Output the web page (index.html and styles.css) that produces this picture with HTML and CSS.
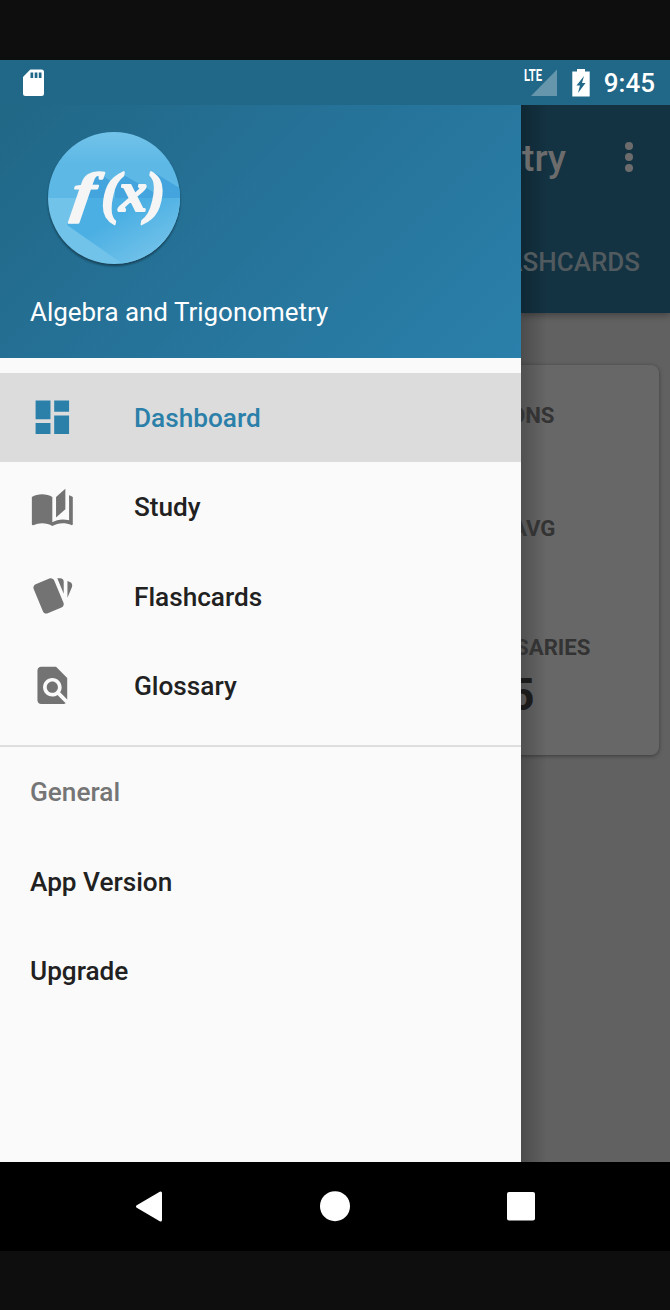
FILE: index.html
```html
<!DOCTYPE html>
<html lang="en">
<head>
<meta charset="utf-8">
<title>Algebra and Trigonometry</title>
<link rel="stylesheet" href="styles.css">
</head>
<body>
<div class="phone">
  <header class="status">
    <svg class="sd" width="22" height="28" viewBox="0 0 22 28"><path fill="#fff" fill-rule="evenodd" d="M8.300 .500H19.500a2.500 2.500 0 0 1 2.500 2.500v21.500A2.500 2.500 0 0 1 19.500 27H3.500a2.500 2.500 0 0 1-2.500-2.500V8zM8.500 3.500v5.500h2.700V3.500zm4.200 0v5.500h2.700V3.500zm4.100 0v5.500h2.700V3.500z"/></svg>
    <svg class="signal" width="34" height="28" viewBox="0 0 34 28"><path fill="#6596ab" d="M33 .500V27H7z"/><text class="lte" x="0" y="12" textLength="18" lengthAdjust="spacingAndGlyphs">LTE</text></svg>
    <svg class="battery" width="18" height="28" viewBox="0 0 18 28"><path fill="#fff" fill-rule="evenodd" d="M5 0h8V2.500h4.700v25H.300V2.500H5zM12 7L4.500 16.500H8L6 24l7.500-10H10z"/></svg>
    <span class="time">9:45</span>
  </header>
  <div class="screen">
    <aside class="drawer">
      <div class="account">
        <svg class="logo" width="138" height="140" viewBox="0 0 138 140">
          <defs>
            <linearGradient id="sky" x1="0" y1="0" x2="0" y2="1"><stop offset="0" stop-color="#74c4ea"/><stop offset=".5" stop-color="#5db8e5"/></linearGradient>
            <linearGradient id="cast" x1="0" y1="0" x2="1" y2="1"><stop offset=".35" stop-color="#4bafe3"/><stop offset=".8" stop-color="#71c2e9"/></linearGradient>
            <clipPath id="disc"><circle cx="69" cy="69" r="66"/></clipPath>
            <filter id="soft"><feGaussianBlur stdDeviation="1"/></filter>
          </defs>
          <circle cx="69" cy="71" r="66" fill="#153f54" filter="url(#soft)"/>
          <g clip-path="url(#disc)">
            <path fill="url(#sky)" d="M0 0h138v69H0z"/>
            <path fill="#71c3e9" d="M0 69h138v69H0z"/>
            <path fill="url(#cast)" d="M36 69h102v69H82L22 96z"/>
            <path fill="#43a4de" d="M54 44l13 9-7 16H40l10-22zM77 45l33 19v5H70V50zM110 44l28 17v8h-30z"/>
          </g>
          <text class="formula" transform="translate(25.500 82) skewX(-7) scale(1.200 .950)">f</text>
          <text class="formula" x="56" y="82.500">(</text>
          <text class="formula variable" x="74" y="82">x</text>
          <text class="formula" x="101" y="82.500">)</text>
        </svg>
        <div class="course">Algebra and Trigonometry</div>
      </div>
      <nav class="menu">
        <a class="item active"><svg class="icon" viewBox="0 0 24 24"><path d="M3 13h8V3H3v10zm0 8h8v-6H3v6zm10 0h8V11h-8v10zm0-18v6h8V3h-8z"/></svg><span>Dashboard</span></a>
        <a class="item"><svg class="icon" viewBox="0 0 24 24"><path d="M19 2L14 6.500V17.500L19 13V2M6.500 5C4.550 5 2.450 5.400 1 6.500V21.160C1 21.410 1.250 21.660 1.500 21.660C1.600 21.660 1.650 21.590 1.750 21.590C3.100 20.940 5.050 20.500 6.500 20.500C8.450 20.500 10.550 20.900 12 22C13.350 21.150 15.800 20.500 17.500 20.500C19.150 20.500 20.850 20.810 22.250 21.560C22.350 21.610 22.400 21.590 22.500 21.590C22.750 21.590 23 21.340 23 21.090V6.500C22.400 6.050 21.750 5.750 21 5.500V19C19.900 18.650 18.700 18.500 17.500 18.500C15.800 18.500 13.350 19.150 12 20V6.500C10.550 5.400 8.450 5 6.500 5Z"/></svg><span>Study</span></a>
        <a class="item"><svg class="icon" viewBox="0 0 24 24"><path d="M21.470 4.350L20.130 3.790V12.820L22.560 6.960C22.970 5.940 22.500 4.770 21.470 4.350M1.970 8.050L6.930 20C7.240 20.770 7.970 21.240 8.740 21.260C9 21.260 9.270 21.210 9.530 21.100L16.900 18.050C17.650 17.740 18.110 17 18.130 16.260C18.140 16 18.090 15.710 18 15.450L13 3.500C12.710 2.730 11.970 2.260 11.190 2.250C10.930 2.250 10.670 2.310 10.420 2.400L3.060 5.450C2.040 5.870 1.550 7.040 1.970 8.050M18.120 4.250A2 2 0 0 0 16.120 2.250H14.670L18.120 10.590"/></svg><span>Flashcards</span></a>
        <a class="item"><svg class="icon" viewBox="0 0 24 24"><path d="M20 19.590V8l-6-6H6c-1.100 0-1.990.900-1.990 2L4 20c0 1.100.890 2 1.990 2H18c.450 0 .850-.150 1.190-.400l-4.430-4.430c-.800.520-1.740.830-2.760.830-2.760 0-5-2.240-5-5s2.240-5 5-5 5 2.240 5 5c0 1.020-.310 1.960-.830 2.750L20 19.590zM9 13c0 1.660 1.340 3 3 3s3-1.340 3-3-1.340-3-3-3-3 1.340-3 3z"/></svg><span>Glossary</span></a>
      </nav>
      <section class="general">
        <div class="item heading">General</div>
        <a class="item">App Version</a>
        <a class="item">Upgrade</a>
      </section>
    </aside>
    <main class="page">
      <div class="appbar">
        <div class="titlebar">
          <span class="title">try</span>
          <svg width="8" height="30" viewBox="0 0 8 30" fill="#6c6c6c"><circle cx="4" cy="4" r="4"/><circle cx="4" cy="15" r="4"/><circle cx="4" cy="26" r="4"/></svg>
        </div>
        <div class="tab">ASHCARDS</div>
      </div>
      <div class="card">
        <div class="label questions">ONS</div>
        <div class="label average">AVG</div>
        <div class="label glossaries">SARIES</div>
        <div class="count">5</div>
      </div>
    </main>
  </div>
  <footer class="navbar">
    <svg width="30" height="32" viewBox="0 0 30 32"><path fill="#fff" stroke="#fff" stroke-width="3" stroke-linejoin="round" d="M3.500 16.500L26.500 3v27z"/></svg>
    <svg width="30" height="32" viewBox="0 0 30 32"><circle cx="15" cy="16.200" r="15" fill="#fff"/></svg>
    <svg width="30" height="32" viewBox="0 0 30 32"><rect x="1" y="2" width="28" height="28.500" rx="2" fill="#fff"/></svg>
  </footer>
</div>
</body>
</html>
```
FILE: styles.css
```css
* { box-sizing: border-box; }
body {
  margin: 0;
  background: #0e0e0e;
  font-family: Roboto, sans-serif;
}
.phone {
  width: 670px;
  height: 1310px;
  padding: 60px 0 59px;
  display: flex;
  flex-direction: column;
}
.status {
  height: 45px;
  padding: 0 15px 0 22px;
  display: flex;
  align-items: center;
  background: #206788;
}
.signal { margin-left: auto; overflow: visible; }
.battery { margin: 0 14px 0 14px; }
.lte { font-size: 16.500px; font-weight: 700; fill: #fff; }
.time {
  font-size: 26px;
  font-weight: 500;
  line-height: 43px;
  padding-top: 2px;
  color: #fff;
}
.screen {
  flex: 1;
  min-height: 0;
  display: flex;
}
.drawer {
  width: 521px;
  flex: none;
  background: #fafafa;
}
.account {
  height: 253px;
  padding: 23.500px 30px 0;
  background: linear-gradient(135deg, #216786 0%, #26739a 50%, #2a80aa 100%);
}
.logo { display: block; margin-left: 15px; }
.formula {
  font-family: "Liberation Serif", serif;
  font-size: 58px;
  font-weight: 700;
  font-style: italic;
  fill: #f5f5f5;
  stroke: #f5f5f5;
  stroke-width: 2px;
  stroke-linejoin: round;
}
.variable { font-size: 56px; }
.course {
  margin-top: 28px;
  font-size: 25.950px;
  line-height: 30px;
  color: #fff;
}
.menu { padding: 15px 0; }
.item {
  height: 89.330px;
  padding: 1px 30px 0;
  display: flex;
  align-items: center;
  gap: 59.300px;
  font-size: 26.200px;
  font-weight: 500;
  color: #212121;
}
.icon {
  width: 44.670px;
  height: 44.670px;
  margin-top: -1px;
  fill: #737373;
}
.active { background: #dcdcdc; color: #2b80aa; }
.active .icon { fill: #2b80aa; }
.general { border-top: 2px solid #dedede; }
.heading { color: #757575; }
.page {
  width: 149px;
  overflow: hidden;
  background: linear-gradient(90deg, rgba(0, 0, 0, .22), rgba(0, 0, 0, 0) 26px), #616161;
}
.appbar {
  height: 208px;
  background: linear-gradient(90deg, rgba(0, 0, 0, .22), rgba(0, 0, 0, 0) 26px), #133242;
  box-shadow: 0 2px 7px rgba(0, 0, 0, .35);
}
.titlebar {
  height: 104px;
  padding: 0 37px 0 1px;
  display: flex;
  align-items: center;
  justify-content: space-between;
}
.title {
  font-size: 37.200px;
  font-weight: 500;
  line-height: 44px;
  color: #6c6c6c;
  padding-top: 1px;
}
.tab {
  height: 104px;
  padding: 2px 30px 0 0;
  display: flex;
  justify-content: flex-end;
  align-items: center;
  font-size: 26px;
  font-weight: 500;
  color: #515a5e;
}
.card {
  height: 390px;
  margin: 52px 11px 0 -10px;
  padding: 36px 0 0 10px;
  border-radius: 8px;
  background: linear-gradient(90deg, rgba(0, 0, 0, .22) 10px, rgba(0, 0, 0, 0) 36px), #676767;
  box-shadow: 0 1px 4px rgba(0, 0, 0, .4);
}
.label {
  display: flex;
  justify-content: flex-end;
  font-size: 22.200px;
  font-weight: 700;
  line-height: 28px;
  color: #333;
}
.questions { width: 33.500px; }
.average { width: 34.500px; margin-top: 85px; }
.glossaries { width: 69.500px; margin-top: 91px; }
.count {
  width: 13.500px;
  margin-top: 8px;
  display: flex;
  justify-content: flex-end;
  font-size: 45px;
  font-weight: 700;
  line-height: 52px;
  color: #1b1b1b;
}
.navbar {
  height: 89px;
  padding: 0 134px 2px;
  display: flex;
  align-items: center;
  justify-content: space-between;
  background: #000;
}
```
